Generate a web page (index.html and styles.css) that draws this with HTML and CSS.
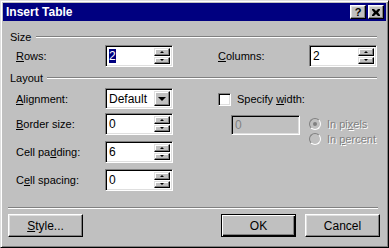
FILE: index.html
```html
<!DOCTYPE html>
<html lang="en">
<head>
    <meta charset="UTF-8">
    <title>Insert Table</title>
    <link rel="stylesheet" href="styles.css">
</head>
<body>

    <!-- Insert Table dialog -->
    <div class="window">
        <div class="titlebar">
            <span class="title">Insert Table</span>
            <div class="title-buttons">
                <span class="tbtn help">?</span>
                <span class="tbtn close">
                    <svg width="8" height="7" viewBox="0 0 8 7"><path d="M0 0h2l2 2 2-2h2v1L6 3.5 8 6v1H6L4 5 2 7H0V6l2-2.5L0 1z" fill="#000"/></svg>
                </span>
            </div>
        </div>

        <div class="content">
            <div class="group-head"><span>Size</span><span class="rule"></span></div>
            <div class="cols size-row">
                <div class="col-left">
                    <div class="field">
                        <label><u>R</u>ows:</label>
                        <div class="box spin">
                            <span class="value"><span class="selected">2</span></span>
                            <span class="arrows"><span class="arr up"></span><span class="arr down"></span></span>
                        </div>
                    </div>
                </div>
                <div class="col-right">
                    <div class="field">
                        <label class="wide"><u>C</u>olumns:</label>
                        <div class="box spin">
                            <span class="value">2</span>
                            <span class="arrows"><span class="arr up"></span><span class="arr down"></span></span>
                        </div>
                    </div>
                </div>
            </div>

            <div class="group-head layout-head"><span>Layout</span><span class="rule"></span></div>
            <div class="cols layout">
                <div class="col-left">
                    <div class="field first">
                        <label><u>A</u>lignment:</label>
                        <div class="box select">
                            <span class="value">Default</span>
                            <span class="drop"><span class="tri"></span></span>
                        </div>
                    </div>
                    <div class="field">
                        <label><u>B</u>order size:</label>
                        <div class="box spin">
                            <span class="value">0</span>
                            <span class="arrows"><span class="arr up"></span><span class="arr down"></span></span>
                        </div>
                    </div>
                    <div class="field">
                        <label>Cell pa<u>d</u>ding:</label>
                        <div class="box spin">
                            <span class="value">6</span>
                            <span class="arrows"><span class="arr up"></span><span class="arr down"></span></span>
                        </div>
                    </div>
                    <div class="field">
                        <label>C<u>e</u>ll spacing:</label>
                        <div class="box spin">
                            <span class="value">0</span>
                            <span class="arrows"><span class="arr up"></span><span class="arr down"></span></span>
                        </div>
                    </div>
                </div>
                <div class="col-right">
                    <div class="check-row">
                        <span class="checkbox"></span>
                        <span>Specify <u>w</u>idth:</span>
                    </div>
                    <div class="width-row">
                        <div class="box disabled"><span class="value">0</span></div>
                        <div class="radios">
                            <div class="radio-row"><span class="radio on"></span><span class="dim">In pi<u>x</u>els</span></div>
                            <div class="radio-row"><span class="radio"></span><span class="dim">In <u>p</u>ercent</span></div>
                        </div>
                    </div>
                </div>
            </div>

            <div class="separator"></div>

            <div class="actions">
                <button type="button"><u>S</u>tyle...</button>
                <span class="spacer"></span>
                <button type="button" class="default">OK</button>
                <button type="button">Cancel</button>
            </div>
        </div>
    </div>

</body>
</html>
```

FILE: styles.css
```css
body {
    margin: 0;
    padding: 0;
    background-color: #c0c0c0;
    font-family: "Liberation Sans", Arial, sans-serif;
    font-size: 11px;
    color: #000;
}
.window {
    width: 389px;
    height: 248px;
    box-sizing: border-box;
    padding: 2px;
    background-color: #c0c0c0;
    border: 1px solid;
    border-color: #dfdfdf #000 #000 #dfdfdf;
    box-shadow: inset 1px 1px #fff, inset -1px -1px #808080;
}
.titlebar {
    height: 18px;
    background-color: #000080;
    display: flex;
    align-items: center;
    padding-left: 3px;
}
.title {
    color: #fff;
    font-weight: bold;
    font-size: 12px;
    flex: 1;
}
.title-buttons {
    display: flex;
    gap: 2px;
    margin-right: 2px;
}
.tbtn {
    width: 16px;
    height: 14px;
    box-sizing: border-box;
    background-color: #c0c0c0;
    border: 1px solid;
    border-color: #fff #000 #000 #fff;
    box-shadow: inset -1px -1px #808080, inset 1px 1px #dfdfdf;
    display: flex;
    align-items: center;
    justify-content: center;
    font-weight: bold;
    font-size: 11px;
    line-height: 1;
}
.content {
    padding: 9px 6px 0 5px;
}
.group-head {
    display: flex;
    align-items: center;
    height: 14px;
    padding-left: 2px;
}
.rule {
    flex: 1;
    margin: 0 3px 0 5px;
    border-top: 1px solid #808080;
    border-bottom: 1px solid #fff;
}
.layout-head {
    margin-top: 4px;
}
.layout-head .rule {
    margin-left: 4px;
}
.cols {
    display: flex;
}
.col-left {
    width: 210px;
    display: flex;
    flex-direction: column;
}
.col-right {
    flex: 1;
}
.size-row {
    margin-top: 1px;
}
.layout {
    margin-top: 3px;
}
.field {
    display: flex;
    align-items: center;
    padding-left: 8px;
}
.col-right .field {
    padding-left: 0;
}
.layout .field {
    margin-top: 6px;
}
.layout .field.first {
    margin-top: 0;
    margin-bottom: -2px;
}
label {
    width: 89px;
}
label.wide {
    width: 91px;
}
.box {
    width: 68px;
    height: 22px;
    box-sizing: border-box;
    background-color: #fff;
    border: 1px solid;
    border-color: #808080 #fff #fff #808080;
    box-shadow: inset 1px 1px #000, inset -1px -1px #dfdfdf;
    display: flex;
    align-items: stretch;
    padding: 1px;
}
.box .value {
    flex: 1;
    padding-left: 2px;
    display: flex;
    align-items: center;
    font-size: 12px;
}
.selected {
    background-color: #000080;
    color: #fff;
}
.arrows {
    width: 16px;
    display: flex;
    flex-direction: column;
    gap: 1px;
    padding: 1px 1px 1px 0;
}
.arr {
    flex: 1;
    box-sizing: border-box;
    background-color: #c0c0c0;
    border: 1px solid;
    border-color: #dfdfdf #000 #000 #dfdfdf;
    box-shadow: inset -1px -1px #808080, inset 1px 1px #fff;
    display: flex;
    align-items: center;
    justify-content: center;
}
.arr::after {
    content: "";
    width: 0;
    height: 0;
    border-left: 2px solid transparent;
    border-right: 2px solid transparent;
}
.arr.up::after {
    border-bottom: 2px solid #000;
}
.arr.down::after {
    border-top: 2px solid #000;
}
.select {
    height: 21px;
}
.drop {
    width: 16px;
    margin: 1px 1px 1px 0;
    box-sizing: border-box;
    background-color: #c0c0c0;
    border: 1px solid;
    border-color: #dfdfdf #000 #000 #dfdfdf;
    box-shadow: inset -1px -1px #808080, inset 1px 1px #fff;
    display: flex;
    align-items: center;
    justify-content: center;
}
.tri {
    width: 0;
    height: 0;
    border-left: 4px solid transparent;
    border-right: 4px solid transparent;
    border-top: 4px solid #000;
}
.check-row {
    height: 22px;
    display: flex;
    align-items: center;
    gap: 6px;
}
.checkbox {
    width: 13px;
    height: 13px;
    box-sizing: border-box;
    background-color: #fff;
    border: 1px solid;
    border-color: #808080 #fff #fff #808080;
    box-shadow: inset 1px 1px #000, inset -1px -1px #dfdfdf;
}
.width-row {
    display: flex;
    align-items: flex-start;
    margin-top: 5px;
    padding-left: 13px;
}
.box.disabled {
    width: 69px;
    height: 20px;
    background-color: #c0c0c0;
    color: #808080;
}
.radios {
    margin-left: 9px;
    margin-top: 1px;
}
.radio-row {
    height: 15px;
    display: flex;
    align-items: center;
    gap: 6px;
}
.radio {
    width: 12px;
    height: 12px;
    box-sizing: border-box;
    border-radius: 50%;
    background-color: #c0c0c0;
    border: 1px solid;
    border-color: #808080 #fff #fff #808080;
    display: flex;
    align-items: center;
    justify-content: center;
}
.radio.on::after {
    content: "";
    width: 4px;
    height: 4px;
    border-radius: 50%;
    background-color: #808080;
}
.dim {
    color: #808080;
    text-shadow: 1px 1px #fff;
}
.separator {
    margin: 16px 2px 0 0;
    border-top: 1px solid #808080;
    border-bottom: 1px solid #fff;
}
.actions {
    display: flex;
    gap: 9px;
    margin-top: 5px;
}
.spacer {
    flex: 1;
}
button {
    width: 75px;
    height: 23px;
    padding: 0;
    font-family: "Liberation Sans", Arial, sans-serif;
    font-size: 12px;
    color: #000;
    background-color: #c0c0c0;
    border: 1px solid;
    border-color: #fff #000 #000 #fff;
    box-shadow: inset -1px -1px #808080, inset 1px 1px #dfdfdf;
}
button.default {
    border-color: #000;
    box-shadow: inset 1px 1px #fff, inset -1px -1px #000, inset -2px -2px #808080;
}
```
